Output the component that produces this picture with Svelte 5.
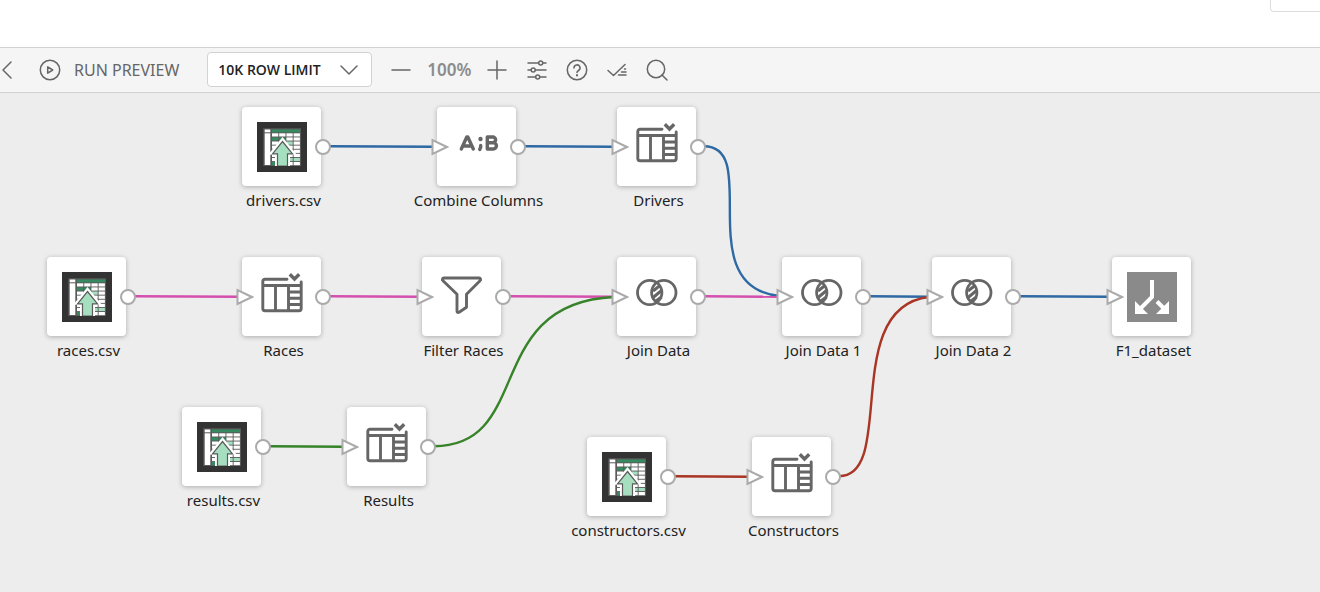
<script>
  const nodes = [
    { id: 'drivers.csv', x: 242, y: 14, icon: 'file', input: false },
    { id: 'Combine Columns', x: 437, y: 14, icon: 'combine', input: true },
    { id: 'Drivers', x: 617, y: 14, icon: 'columns', input: true },
    { id: 'races.csv', x: 47, y: 164, icon: 'file', input: false },
    { id: 'Races', x: 242, y: 164, icon: 'columns', input: true },
    { id: 'Filter Races', x: 422, y: 164, icon: 'filter', input: true },
    { id: 'Join Data', x: 617, y: 164, icon: 'join', input: true },
    { id: 'Join Data 1', x: 782, y: 164, icon: 'join', input: true },
    { id: 'Join Data 2', x: 932, y: 164, icon: 'join', input: true },
    { id: 'F1_dataset', x: 1112, y: 164, icon: 'output', input: true, last: true },
    { id: 'results.csv', x: 182, y: 314, icon: 'file', input: false },
    { id: 'Results', x: 347, y: 314, icon: 'columns', input: true },
    { id: 'constructors.csv', x: 587, y: 344, icon: 'file', input: false },
    { id: 'Constructors', x: 752, y: 344, icon: 'columns', input: true }
  ];
  const blue = '#2e69a3';
  const pink = '#d44fae';
  const green = '#37832a';
  const red = '#a93524';
  const wires = [
    { c: blue, d: 'M329 53.2 L434 53.8' },
    { c: blue, d: 'M524 53.2 L614 53.8' },
    { c: pink, d: 'M134 203.2 L239 203.8' },
    { c: pink, d: 'M329 203.2 L419 203.8' },
    { c: pink, d: 'M509 203.2 L614 203.8' },
    { c: green, d: 'M434 353.2 C534 353.2 482 210 614 204' },
    { c: blue, d: 'M704 53.2 C762 53.2 690 193 779 203' },
    { c: pink, d: 'M704 203.2 L779 203.8' },
    { c: blue, d: 'M869 203.2 L929 203.8' },
    { c: blue, d: 'M1019 203.2 L1109 203.8' },
    { c: green, d: 'M269 353.2 L344 353.8' },
    { c: red, d: 'M674 383.2 L749 383.8' },
    { c: red, d: 'M839 383.2 C897 383.2 840 214 929 204' }
  ];

  // Spreadsheet thumbnail: w = white, g = green, m = mint cells
  const sheet = ['wwww', 'ggww', 'wwmw', 'wwww', 'wwww', 'wwww', 'wwmm', 'gwww'];
  const tint = { w: '#fff', g: '#358a60', m: '#a5dfc0' };
</script>

{#snippet glyph(name)}
  {#if name === 'file'}
    <svg class="glyph" viewBox="0 0 50 50" aria-hidden="true">
      <rect width="50" height="50" fill="#333" />
      <rect x="6.300" y="6.300" width="37.700" height="37.700" fill="#5a5a5a" />
      <rect x="7.700" y="7.500" width="5.600" height="2.800" fill="#fff" />
      <rect x="7.700" y="11.300" width="5.600" height="31.700" fill="#fff" />
      <rect x="15" y="7.500" width="28" height="2.800" fill="#358a60" />
      {#each sheet as row, r}
        {#each row as cell, c}
          <rect x={15 + c * 7.2} y={11.3 + r * 4.1} width="6.300" height="3.200" fill={tint[cell]} />
        {/each}
      {/each}
      <path d="M25.500 15 L39.800 32.800 H33 V44 H18 V32.800 H11.200 Z" fill="#fff" />
      <path d="M25.500 19.500 L35.500 31.800 H30.500 V44 H20.500 V31.800 H15.500 Z" fill="#a5dfc0" stroke="#5a5a5a" stroke-width="1.200" />
      <path d="M18 44h15v2H18z" fill="#333" />
    </svg>
  {:else if name === 'combine'}
    <svg class="glyph" viewBox="0 0 50 50" fill="none" stroke="#666" stroke-width="3.400" stroke-linecap="round" stroke-linejoin="round" aria-hidden="true">
      <path d="M9.300 27 14.800 15h1L21.300 27M11.500 24h8" />
      <path d="M35.300 15h5.500a2.800 2.800 0 0 1 0 5.700H35.300h6a3.100 3.100 0 0 1 0 6.300H35.300z" />
      <circle cx="28.500" cy="17" r="2.200" fill="#666" stroke="none" />
      <path d="M28.700 23.500v1.500l-1 2.500" />
    </svg>
  {:else if name === 'columns'}
    <svg class="glyph" viewBox="0 0 50 50" fill="none" stroke="#666" stroke-width="2.900" stroke-linejoin="round" stroke-linecap="round" aria-hidden="true">
      <path d="M30 7.200H8a2.200 2.200 0 0 0-2.200 2.200V36.500a2.200 2.200 0 0 0 2.200 2.200H42a2.200 2.200 0 0 0 2.200-2.200V10M6 13.500H44M18.500 14V38.500M31.500 14V38.500M32 20H44M32 26.300H44M32 32.500H44" />
      <path d="M32.800 2.300 37.500 7 42.200 2.300" stroke-width="3.400" stroke-linecap="butt" stroke-linejoin="miter" />
    </svg>
  {:else if name === 'filter'}
    <svg class="glyph" viewBox="0 0 50 50" fill="none" stroke="#666" stroke-width="2.900" stroke-linejoin="round" aria-hidden="true">
      <path d="M7 6H42a1.500 1.500 0 0 1 1 2.700L29.500 22.300V35.300L22.500 40Q20 41.500 20 39V22.300L6 8.700a1.500 1.500 0 0 1 1-2.700Z" />
    </svg>
  {:else if name === 'join'}
    <svg class="glyph" viewBox="0 0 50 50" fill="none" stroke="#666" stroke-width="2.800" aria-hidden="true">
      <circle cx="17.700" cy="20.500" r="12.200" />
      <circle cx="31.800" cy="20.500" r="12.200" />
      <path d="M21 19 28 13.500M20.500 26 29.500 18.500M22.500 30 29.500 25" stroke-width="3" />
    </svg>
  {:else}
    <svg class="glyph" viewBox="0 0 50 50" aria-hidden="true">
      <rect width="50" height="50" fill="#8a8a8a" />
      <path d="M25 8V25L14 36M30 29.500 37 36.500" fill="none" stroke="#fff" stroke-width="4" />
      <path d="M8 29V42H21ZM42 29V42H29Z" fill="#fff" />
    </svg>
  {/if}
{/snippet}

<div class="page">
  <header class="top"><div class="tab"></div></header>

  <div class="toolbar" role="toolbar" aria-label="Dataflow tools">
    <button class="back" aria-label="Back">
      <svg width="12" height="20" viewBox="0 0 12 20"><path d="M11 2 3 10l8 8" /></svg>
    </button>
    <button class="run">
      <svg width="22" height="22" viewBox="0 0 22 22"><circle cx="11" cy="11" r="9.700" /><path d="M8.700 7.800v6.400l5-3.200z" /></svg>
      <span>RUN PREVIEW</span>
    </button>
    <div class="limit">
      <select aria-label="Row limit"><option>10K ROW LIMIT</option></select>
      <svg width="18" height="10" viewBox="0 0 18 10" aria-hidden="true"><path d="M1 1l8 8 8-8" /></svg>
    </div>
    <div class="tools">
      <button aria-label="Zoom out"><svg width="22" height="22" viewBox="0 0 22 22"><path d="M2 11h18" /></svg></button>
      <span class="zoom">100%</span>
      <button aria-label="Zoom in"><svg width="22" height="22" viewBox="0 0 22 22"><path d="M2 11h18M11 2v18" /></svg></button>
      <button aria-label="Settings"><svg width="22" height="22" viewBox="0 0 22 22"><path d="M2 4h10.500M17 4h3M2 11h3M9.500 11H20M2 18h7.500M14 18h6" /><circle cx="14.700" cy="4" r="2" /><circle cx="7.200" cy="11" r="2" /><circle cx="11.700" cy="18" r="2" /></svg></button>
      <button aria-label="Help"><svg width="22" height="22" viewBox="0 0 22 22"><circle cx="11" cy="11" r="9.700" /><path d="M8 9a3 3 0 1 1 4.500 2.500Q11 12.300 11 13.500" /><path d="M11 16v.5" stroke-width="2" /></svg></button>
      <button aria-label="Validate"><svg width="22" height="22" viewBox="0 0 22 22"><path d="M2 11.500 7.500 16.500 19 5.500M18.500 10h1M15.500 13h4.500M12.500 16H20" /></svg></button>
      <button aria-label="Search"><svg width="22" height="22" viewBox="0 0 22 22"><circle cx="10" cy="10" r="8.700" /><path d="M16 16l5 5" /></svg></button>
    </div>
  </div>

  <main class="canvas">
    <svg class="wires" aria-hidden="true">
      {#each wires as w}
        <path d={w.d} stroke={w.c} />
      {/each}
    </svg>
    {#each nodes as n}
      <div class="node" style:left="{n.x}px" style:top="{n.y}px">
        <div class="box">{@render glyph(n.icon)}</div>
        <span class="label">{n.id}</span>
        {#if n.input}
          <svg class="in" width="18" height="18" viewBox="0 0 18 18" aria-hidden="true"><path d="M1.500 2v14L16 9z" /></svg>
        {/if}
        {#if !n.last}<i class="out"></i>{/if}
      </div>
    {/each}
  </main>
</div>

<style>
  :global(body) {
    margin: 0;
  }
  .page {
    display: flex;
    flex-direction: column;
    min-height: 100vh;
    background: #fff;
    font-family: 'Noto Sans', sans-serif;
    color: #222;
    overflow: hidden;
  }
  .top {
    display: flex;
    justify-content: flex-end;
    align-items: flex-start;
    height: 47px;
  }
  .tab {
    width: 50px;
    height: 12px;
    box-sizing: border-box;
    border: solid #ddd;
    border-width: 0 0 1px 1px;
    border-radius: 0 0 0 4px;
  }
  .toolbar {
    display: flex;
    align-items: center;
    height: 43px;
    padding-bottom: 1px;
    background: #f5f5f5;
    border-top: 1px solid #d2d2d2;
    border-bottom: 1px solid #d2d2d2;
  }
  .toolbar svg {
    display: block;
    flex: none;
    fill: none;
    stroke: #666;
    stroke-width: 1.5px;
    stroke-linecap: round;
    stroke-linejoin: round;
  }
  button {
    display: flex;
    align-items: center;
    justify-content: center;
    padding: 0;
    border: 0;
    background: none;
    color: #666;
    font: inherit;
    cursor: pointer;
  }
  .run {
    gap: 13px;
    margin-left: 27px;
    font-size: 16px;
  }
  .limit {
    display: grid;
    align-items: center;
    width: 165px;
    margin-left: 28px;
  }
  .limit select,
  .limit svg {
    grid-area: 1 / 1;
  }
  .limit svg {
    justify-self: end;
    margin-right: 14px;
    pointer-events: none;
  }
  select {
    appearance: none;
    width: 100%;
    height: 35px;
    padding: 0 10px;
    border: 1px solid #d2d2d2;
    border-radius: 4px;
    background: #fff;
    color: #222;
    font: 600 14px 'Open Sans', sans-serif;
  }
  .tools {
    display: flex;
    align-items: center;
    gap: 18px;
    margin-left: 18px;
  }
  .zoom {
    width: 44px;
    margin: 0 -3px;
    color: #8c8c8c;
    font-size: 17px;
    font-weight: 600;
    text-align: center;
  }
  .canvas {
    position: relative;
    flex: 1;
    min-height: 480px;
    background: #ededed;
  }
  .wires {
    position: absolute;
    inset: 0;
    width: 100%;
    height: 100%;
    overflow: visible;
  }
  .wires path {
    fill: none;
    stroke-width: 2.4px;
  }
  .node {
    position: absolute;
    display: flex;
    flex-direction: column;
    align-items: center;
    width: 83px;
  }
  .box {
    display: grid;
    place-items: center;
    align-self: flex-start;
    width: 79px;
    height: 79px;
    border-radius: 4px;
    background: #fff;
    box-shadow: 0 1px 5px rgb(0 0 0 / 28%);
  }
  .glyph {
    width: 50px;
    height: 50px;
  }
  .label {
    margin-top: 4px;
    font-size: 15px;
    line-height: 20px;
    white-space: nowrap;
  }
  .in {
    position: absolute;
    left: -6px;
    top: 31px;
    fill: #fff;
    stroke: #aaa;
    stroke-width: 2px;
  }
  .out {
    position: absolute;
    left: 73px;
    top: 32px;
    box-sizing: border-box;
    width: 16px;
    height: 16px;
    border: 2px solid #aaa;
    border-radius: 50%;
    background: #fff;
  }
</style>
